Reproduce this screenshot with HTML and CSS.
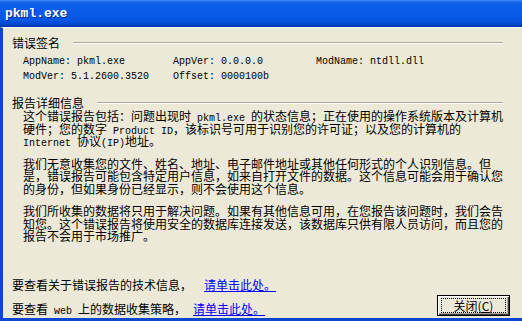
FILE: index.html
```html
<!DOCTYPE html>
<html lang="zh-CN">
<head>
<meta charset="utf-8">
<title>pkml.exe</title>
<link rel="stylesheet" href="styles.css">
</head>
<body>
<div class="window">
  <div class="titlebar"><span class="title">pkml.exe</span></div>
  <div class="client">
    <section class="group">
      <div class="group-head"><span class="group-label">错误签名</span><span class="etch"></span></div>
      <div class="sig">
        <span class="en">AppName: pkml.exe</span>
        <span class="en">AppVer: 0.0.0.0</span>
        <span class="en">ModName: ntdll.dll</span>
        <span class="en">ModVer: 5.1.2600.3520</span>
        <span class="en">Offset: 0000100b</span>
      </div>
    </section>
    <section class="group details">
      <div class="group-head"><span class="group-label">报告详细信息</span><span class="etch"></span></div>
      <div class="para">
        <div class="line">这个错误报告包括：问题出现时<span class="en"> pkml.exe </span>的状态信息；正在使用的操作系统版本及计算机</div>
        <div class="line">硬件；您的数字<span class="en"> Product ID</span>，该标识号可用于识别您的许可证；以及您的计算机的</div>
        <div class="line"><span class="en">Internet </span>协议<span class="en">(IP)</span>地址。</div>
      </div>
      <div class="para">
        <div class="line">我们无意收集您的文件、姓名、地址、电子邮件地址或其他任何形式的个人识别信息。但</div>
        <div class="line">是，错误报告可能包含特定用户信息，如来自打开文件的数据。这个信息可能会用于确认您</div>
        <div class="line">的身份，但如果身份已经显示，则不会使用这个信息。</div>
      </div>
      <div class="para">
        <div class="line">我们所收集的数据将只用于解决问题。如果有其他信息可用，在您报告该问题时，我们会告</div>
        <div class="line">知您。这个错误报告将使用安全的数据库连接发送，该数据库只供有限人员访问，而且您的</div>
        <div class="line">报告不会用于市场推广。</div>
      </div>
    </section>
    <div class="footer">
      <div class="links">
        <div class="link-row">要查看关于错误报告的技术信息，<a class="link link-tech" href="#">请单击此处。</a></div>
        <div class="link-row">要查看<span class="en"> web </span>上的数据收集策略，<a class="link link-web" href="#">请单击此处。</a></div>
      </div>
      <button class="btn" type="button"><span class="focus">关闭(<u>C</u>)</span></button>
    </div>
  </div>
</div>
</body>
</html>
```

FILE: styles.css
```css
html, body {
  margin: 0;
  padding: 0;
  background: #ece9d8;
}
body {
  width: 522px;
  height: 321px;
  overflow: hidden;
  font-family: "Noto Sans CJK SC", "Liberation Sans", sans-serif;
  font-size: 12px;
  color: #000;
}
.window {
  width: 522px;
  height: 321px;
  display: flex;
  flex-direction: column;
}
.titlebar {
  height: 26px;
  flex: none;
  background: linear-gradient(to bottom, #3c8ef5 0, #1868ea 2px, #0c5ee8 5px, #0a5ae8 50%, #0654e2 80%, #0249d2 92%, #003cb0 100%);
  border-bottom: 1px solid #0a3aa8;
  display: flex;
  align-items: center;
  padding-left: 5px;
}
.title {
  font-family: "Liberation Mono", "DejaVu Sans Mono", monospace;
  font-weight: bold;
  font-size: 13px;
  color: #fff;
  text-shadow: 1px 1px 0 #0a2a80;
}
.client {
  flex: 1;
  border-left: 3px solid #0a46d0;
  border-bottom: 3px solid #0a46d0;
  border-top: 1px solid #fafaf6;
  padding: 8px 19px 0 9px;
  display: flex;
  flex-direction: column;
  min-height: 0;
}
.group-head {
  display: flex;
  align-items: center;
  height: 14px;
  line-height: 14px;
}
.group-label {
  white-space: nowrap;
}
.etch {
  flex: 1;
  margin-left: 13px;
  height: 0;
  border-top: 1px solid #aca899;
  border-bottom: 1px solid #ffffff;
}
.en {
  font-family: "Liberation Mono", "DejaVu Sans Mono", monospace;
  font-size: 10px;
  white-space: pre;
}
.para .en,
.link-row .en {
  line-height: 0;
}
.sig {
  display: grid;
  grid-template-columns: 150px 143px auto;
  grid-auto-rows: 15px;
  margin: 4px 0 0 11px;
  line-height: 15px;
}
.details {
  margin-top: 12px;
}
.para {
  margin-left: 11px;
  white-space: nowrap;
}
.line {
  height: 12.5px;
  line-height: 12.5px;
}
.para + .para {
  margin-top: 10px;
}
.footer {
  margin-top: auto;
  display: flex;
  align-items: flex-end;
  justify-content: space-between;
  padding-bottom: 2px;
}
.links {
  display: flex;
  flex-direction: column;
  gap: 10px;
  line-height: 14px;
}
.link-row {
  height: 14px;
  white-space: nowrap;
}
.link {
  color: #0000ff;
  text-decoration: underline;
}
.link-tech {
  margin-left: 12px;
}
.link-web {
  margin-left: 7px;
}
.btn {
  width: 73px;
  height: 21px;
  margin-right: -7px;
  padding: 0;
  font: inherit;
  font-size: 12px;
  background: #ece9d8;
  border: 1px solid #000;
  box-shadow: inset 1px 1px 0 #fff, inset -1px -1px 0 #404040, inset -2px -2px 0 #aca899;
  display: flex;
  align-items: center;
  justify-content: center;
}
.focus {
  display: block;
  width: 63px;
  height: 13px;
  line-height: 13px;
  border: 1px dotted #000;
  text-align: center;
  color: #000;
}
```
